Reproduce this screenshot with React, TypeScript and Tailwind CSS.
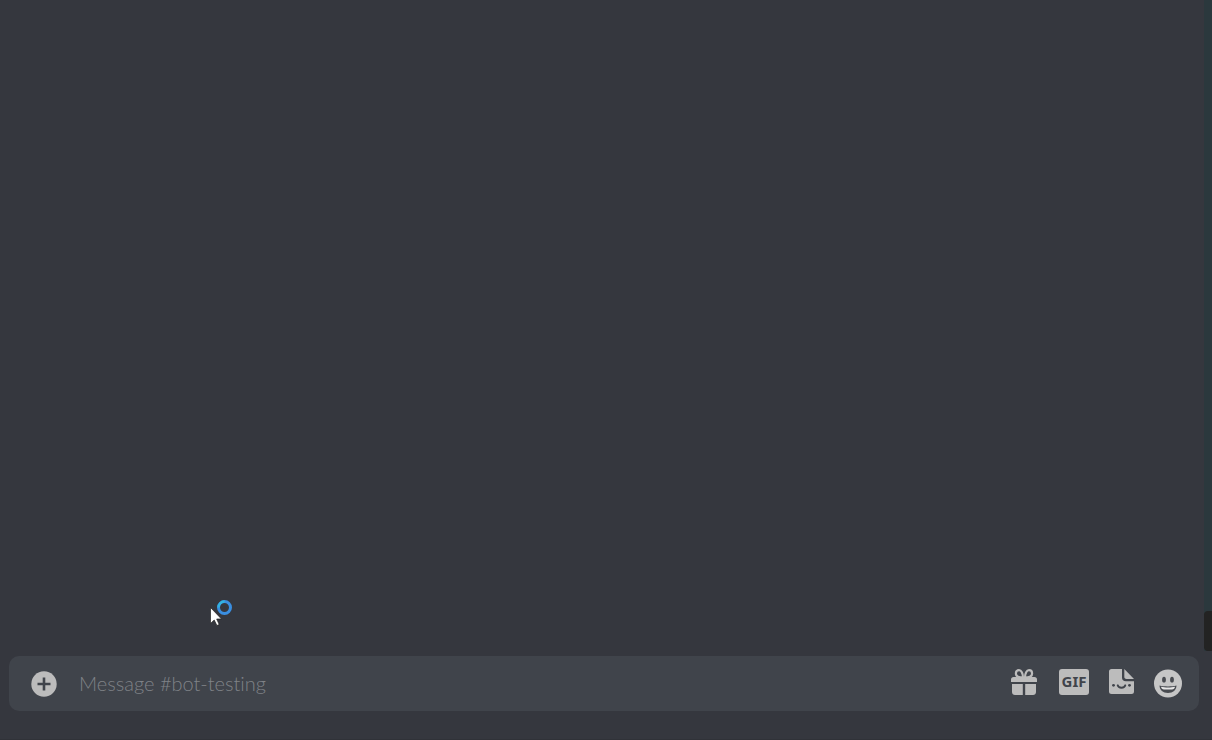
import React, { useState } from 'react';

const GiftIcon = () => (
  <svg className="size-8" viewBox="0 0 32 32" fill="none" aria-hidden="true">
    <path
      d="M5.500 11H26.500C28 11 29 12 29 13.500V16H3V13.500C3 12 4 11 5.500 11Z"
      fill="currentColor"
    />
    <path
      d="M4 18H14.800V29H7C5.300 29 4 27.700 4 26Z M17.200 18H28V26C28 27.700 26.700 29 25 29H17.200Z"
      fill="currentColor"
    />
    <path
      d="M15 11.500C15 7.200 13.200 4.200 11 4.200C9.100 4.200 7.900 5.600 7.900 7.400C7.900 10 10.400 11.500 15 11.500Z M17 11.500C17 7.200 18.800 4.200 21 4.200C22.900 4.200 24.100 5.600 24.100 7.400C24.100 10 21.600 11.500 17 11.500Z"
      stroke="currentColor"
      strokeWidth="2.200"
    />
  </svg>
);

const StickerIcon = () => (
  <svg className="size-8" viewBox="0 0 32 32" fill="none" aria-hidden="true">
    <path
      d="M5.500 3H16V11.500C16 14 17.500 15.300 19.800 15.300H28V25.500C28 27.200 27 28 25.500 28H5.500C4 28 3 27.200 3 25.500V5.500C3 4 4 3 5.500 3Z"
      fill="currentColor"
    />
    <path d="M18.300 3L28 12.900H20.500C19 12.900 18.300 12.200 18.300 10.800Z" fill="currentColor" />
    <circle cx="7.500" cy="19.300" r="1.400" fill="#40444b" />
    <circle cx="23.500" cy="19.300" r="1.400" fill="#40444b" />
    <path d="M11.700 19.300C12.500 22.500 18.500 22.500 19.300 19.300" stroke="#40444b" strokeWidth="1.900" strokeLinecap="round" />
  </svg>
);

const EmojiIcon = () => (
  <svg className="size-8" viewBox="0 0 32 32" fill="none" aria-hidden="true">
    <circle cx="16" cy="15.500" r="14" fill="#c6c6c6" />
    <ellipse cx="12" cy="11.700" rx="1.900" ry="2.900" fill="#484b50" />
    <ellipse cx="20" cy="11.700" rx="1.900" ry="2.900" fill="#484b50" />
    <path d="M7.500 17.500C12 18.700 20 18.700 24.500 17.500C24.500 22 21 25 16 25C11 25 7.500 22 7.500 17.500Z" fill="#484b50" />
    <path d="M9 18.700C13 19.700 19 19.700 23 18.700C22.700 20.500 21.500 21.500 20 21.500H12C10.500 21.500 9.300 20.500 9 18.700Z" fill="#e6e6e6" />
  </svg>
);

const BusyCursor = () => (
  <svg className="absolute bottom-6 left-52 h-7 w-7" viewBox="0 0 28 28" aria-hidden="true">
    <path
      d="M2.500 8.500V24.500L6.200 21L8.900 26.500L11.200 25.500L8.700 20H13.500Z"
      fill="#fff"
      stroke="#222"
      strokeWidth="0.700"
    />
    <circle cx="16.500" cy="8.500" r="6" fill="none" stroke="#3a8ee0" strokeWidth="3" />
    <path d="M10.500 8.500A6 6 0 0 1 16.500 2.500" fill="none" stroke="#32b4e0" strokeWidth="2.400" />
  </svg>
);

const App: React.FC = () => {
  const [message, setMessage] = useState<string>('');

  const handleSubmit = (event: React.FormEvent) => {
    event.preventDefault();
    setMessage('');
  };

  return (
    <div className="flex min-h-screen flex-col border-b border-[#303238] bg-[#35373e] font-['Lato',sans-serif]">
      <main className="flex flex-1">
        <div className="relative flex-1">
          <BusyCursor />
        </div>
        <div className="flex w-2 flex-col justify-end bg-[#2b383d]">
          <div className="h-10 rounded-l bg-[#232323]" />
        </div>
      </main>
      <form
        onSubmit={handleSubmit}
        className="mt-[5px] mr-[13px] mb-7 ml-[9px] flex h-[55px] items-center rounded-[10px] bg-[#40444b] pr-[15px] pl-[22px] text-[#bcbcbc]"
      >
        <button type="button" aria-label="Upload a file" className="shrink-0">
          <svg className="size-[26px]" viewBox="0 0 26 26" aria-hidden="true">
            <circle cx="13" cy="13" r="12.700" fill="currentColor" />
            <path d="M13 6.500V19.500M6.500 13H19.500" stroke="#40444b" strokeWidth="2.600" />
          </svg>
        </button>
        <input
          type="text"
          aria-label="Message #bot-testing"
          placeholder="Message #bot-testing"
          value={message}
          onChange={(e) => setMessage(e.target.value)}
          className="ml-[22px] min-w-0 flex-1 pb-0.5 text-xl font-light text-[#dcddde] outline-none [font-variant-ligatures:none] placeholder:text-[#7f8287]"
        />
        <div className="flex items-center gap-3.5">
          <div className="flex items-center gap-3.5 pb-1">
            <button type="button" aria-label="Send a gift">
              <GiftIcon />
            </button>
            <button type="button" aria-label="Open GIF picker" className="pr-[3px] pl-[5px]">
              <span className="flex h-[26px] w-[30px] items-center justify-center rounded-[3px] bg-[#bcbcbc] font-['Noto_Sans',sans-serif] text-[15px] font-bold text-[#40444b]">
                GIF
              </span>
            </button>
            <button type="button" aria-label="Open sticker picker">
              <StickerIcon />
            </button>
          </div>
          <button type="button" aria-label="Select emoji">
            <EmojiIcon />
          </button>
        </div>
      </form>
    </div>
  );
};

export default App;
